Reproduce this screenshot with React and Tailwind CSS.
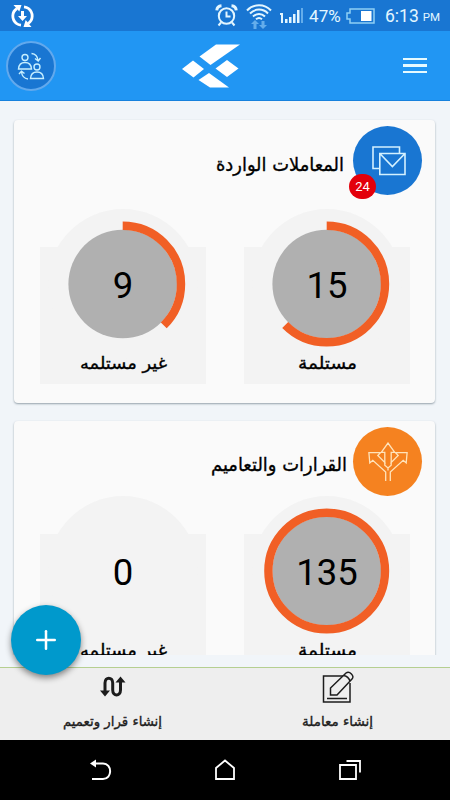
import React from 'react';
import { Plus } from 'lucide-react';

const sections = [
  {
    id: 'incoming',
    title: 'المعاملات الواردة',
    titleClass: 'right-[91px] top-[26px]',
    titleWidth: 128,
    color: 'bg-[#1976d2]',
    badge: 24,
    icon: MailIcon,
    gap: 'pt-[89px]',
    stats: [
      { label: 'مستلمة', width: 59, value: 15, percent: 62.5 },
      { label: 'غير مستلمه', width: 87, value: 9, percent: 37.5 },
    ],
  },
  {
    id: 'decisions',
    title: 'القرارات والتعاميم',
    titleClass: 'right-[88px] top-[25px]',
    titleWidth: 136,
    color: 'bg-[#f58220]',
    icon: ArrowsIcon,
    gap: 'pt-[75px]',
    stats: [
      { label: 'مستلمة', width: 59, value: 135, percent: 100 },
      { label: 'غير مستلمه', width: 87, value: 0, percent: 0 },
    ],
  },
];

function MailIcon() {
  return (
    <svg className="ml-[3px]" width="34" height="30" viewBox="0 0 34 30" fill="none" stroke="#d4f1ff" strokeWidth="1.6">
      <path d="M7.5 22.500H1V1h26.500v6" />
      <path d="M7.800 7.500H33v21H7.800zM7.800 7.500l12.600 13L33 7.500" />
    </svg>
  );
}

function ArrowsIcon() {
  return (
    <svg className="mt-[1px]" width="40" height="40" viewBox="0 0 40 40" fill="none" stroke="#ffe3ba" strokeWidth="1.300">
      <path d="M17.700 39V30L4.800 18.300 1.800 21 .9 10.700h11.600L9.800 13.500l7 7V10.300h-3.500L20 1l6.700 9.300h-3.500v10.200l7-7-2.700-2.800h11.600L38.200 21l-3-2.700L22.300 30v9" />
      <path d="M16.800 20.500v2.700L20 26l3.200-2.800v-2.700M20 26v2.500" />
    </svg>
  );
}

// Arabic label squeezed to a fixed width so every line keeps its measure
function Label({ text, width, size, className = '' }) {
  return (
    <svg width={width} height={size * 2} className={`block overflow-visible ${className}`}>
      <text
        x={width / 2}
        y={size * 1.3}
        textAnchor="middle"
        textLength={width}
        lengthAdjust="spacingAndGlyphs"
        direction="rtl"
        fontFamily="'DejaVu Sans', sans-serif"
        fontSize={size}
        fill="currentColor"
        stroke="currentColor"
        strokeWidth="0.35"
      >
        {text}
      </text>
    </svg>
  );
}

function Gauge({ value, percent, label, width }) {
  const length = 2 * Math.PI * 58.3;
  return (
    <div className="relative h-[175px] w-[166px]">
      <div className="absolute inset-x-0 bottom-0 top-[38px] bg-[#f3f3f3]" />
      <div className="absolute left-[8px] top-0 size-[150px] rounded-full bg-[#f3f3f3]" />
      <svg className="absolute left-[20px] top-[12px]" width="126" height="126" viewBox="0 0 126 126">
        {percent > 0 && <circle cx="62.700" cy="63" r="54.300" fill="#b0b0b0" />}
        {percent > 0 && (
          <circle
            cx="62.700"
            cy="63"
            r="58.300"
            fill="none"
            stroke="#f15f25"
            strokeWidth="8.400"
            strokeDasharray={`${(length * percent) / 100} ${length}`}
            transform="rotate(-90 62.700 63)"
          />
        )}
      </svg>
      <div className="absolute inset-x-0 top-[52px] text-center font-[Roboto,sans-serif] text-[36.5px] leading-[50px] text-black">
        {value}
      </div>
      <div className="absolute inset-x-0 top-[138px] flex justify-center text-black">
        <Label text={label} width={width} size={17} />
      </div>
    </div>
  );
}

function Section({ section }) {
  const Icon = section.icon;
  return (
    <section className={`relative h-[283px] w-[421px] shrink-0 rounded-[4px] bg-[#fafafa] shadow-[0_1px_2px_rgba(60,80,95,0.5)] ${section.gap}`}>
      <div className={`absolute text-black ${section.titleClass}`}>
        <Label text={section.title} width={section.titleWidth} size={19} />
      </div>
      <div className={`absolute right-[13px] top-[6px] flex size-[69px] items-center justify-center rounded-full ${section.color}`}>
        <Icon />
        {section.badge && (
          <span className="absolute left-[-4px] top-[48px] flex h-[25px] w-[27px] items-center justify-center rounded-full bg-[#e3000b] font-[Roboto,sans-serif] text-[13px] text-white">
            {section.badge}
          </span>
        )}
      </div>
      <div className="flex flex-row-reverse justify-between pl-[26px] pr-[25px]">
        {section.stats.map((stat) => (
          <Gauge key={stat.label} {...stat} />
        ))}
      </div>
    </section>
  );
}

function StatusBar() {
  return (
    <div className="flex h-[31px] items-center bg-[#1976d2] font-[Roboto,sans-serif] text-[#e3f6ff]">
      <svg className="ml-[11px] shrink-0" width="23" height="22" viewBox="0 0 23 22" fill="none" stroke="#fff" strokeWidth="2.800">
        <path d="M6 3.500C.5 7 .5 14.500 5.500 18.500c1 .8 2.500 1.500 4.500 1.700" />
        <path d="M17 18.500c5.500-3.500 5.500-11 .5-15-1-.8-2.500-1.500-4.500-1.700" />
        <path d="M2.500 0h8L8.300 6.500zM20.500 22h-8l2.200-7z" fill="#fff" stroke="none" />
        <path d="M10 6h3v5h3l-4.500 5L7 11h3z" fill="#fff" stroke="none" />
      </svg>
      <svg className="ml-[181px] shrink-0" width="23" height="23" viewBox="0 0 23 23" fill="none" stroke="currentColor" strokeWidth="2">
        <circle cx="11.500" cy="12" r="7.700" />
        <path d="M11.500 7.500V12.500h4M6 18.500l-2.500 3M17 18.500l2.500 3" />
        <path d="M1.800 6.300C2 3.500 3.800 2 6.500 1.800M21.200 6.300C21 3.500 19.200 2 16.500 1.800" strokeWidth="3" />
      </svg>
      <svg className="ml-[8px] shrink-0" width="26" height="26" viewBox="0 0 26 26" fill="none" stroke="currentColor" strokeWidth="2">
        <path d="M1 7.500C7.500.5 18.500.5 25 7.500M4 10.500c5-5.200 13-5.200 18 0M7 13.500c3.500-3.500 8.500-3.500 12 0M10 16.300c2-1.700 4-1.700 6 0" />
        <path d="M9 17l4 4h-2.500v5h-3v-5H5zM17 26l-4-4h2.500v-4h3v4H21z" fill="#64adeb" stroke="none" />
      </svg>
      <svg className="ml-[8px] shrink-0" width="23" height="17" viewBox="0 0 23 17" fill="currentColor">
        <path d="M0 6h3v10H1V8H0zM5 12h2.500v4H5zM9 10h2.500v6H9zM13 7h2.500v9H13zM17 3h2.500v13H17z" />
        <path d="M21 1h2v15h-2z" fill="#64adeb" />
      </svg>
      <span className="ml-[6px] mt-[2px] w-[33px] whitespace-nowrap text-[17px] tracking-[0.1px]">47%</span>
      <svg className="ml-[4px] mt-[1px] shrink-0" width="29" height="16" viewBox="0 0 29 16" fill="none">
        <path d="M4 1h24v14H4v-4H1V5h3z" stroke="#8fd0f5" strokeWidth="1.500" />
        <path d="M15 3h10.500v10H15z" fill="#fff" />
      </svg>
      <span className="ml-[10px] mt-[2px] text-[17.5px]">6:13</span>
      <span className="ml-[4px] mt-[5px] text-[11.5px]">PM</span>
    </div>
  );
}

function Header() {
  return (
    <header className="flex h-[70px] items-center border-b border-[#1681dd] bg-[#2196f3] pl-[6px] pr-[23px]">
      <button className="flex size-[50px] items-center justify-center rounded-full border-2 border-[#62a9ed] bg-[#1976d2]">
        <svg width="28" height="28" viewBox="0 0 28 28" fill="none" stroke="#c6efff" strokeWidth="1.400">
          <circle cx="8" cy="5.500" r="3" />
          <path d="M1.500 17c.3-4.500 2.700-6.500 6.500-6.500s6.200 2 6.500 6.500z" />
          <circle cx="20" cy="15" r="3" />
          <path d="M13.500 26.500c.3-4.500 2.700-6.500 6.500-6.500s6.200 2 6.500 6.500z" />
          <path d="M14.500 1.500c4 .3 6 2.500 6.500 7M18 6.500l3.200 2.500L23.500 6M11 27c-4-.5-6-3-6.500-7M2 22l2.500-2.800L7.500 21.500" />
        </svg>
      </button>
      <svg className="ml-[126px] mt-[1px]" width="58" height="44" viewBox="0 0 58 44" fill="#fff">
        <path d="M34 .5h24L28.500 21 17.500 12.500z" />
        <path d="M11 16.500l11 8.500-10.500 8.500L0 25z" />
        <path d="M45 16L56.500 24.500 45 33 33.500 24.500z" />
        <path d="M27 29l20 14.500H28L16.500 36z" />
      </svg>
      <button className="ml-auto flex w-[24px] flex-col gap-[4px]">
        <span className="h-[2.5px] bg-[#e6faff]" />
        <span className="h-[2.5px] bg-[#e6faff]" />
        <span className="h-[2.5px] bg-[#e6faff]" />
      </button>
    </header>
  );
}

function BottomBar() {
  return (
    <div className="flex h-[73px] border-t border-[#b5cf91] bg-[#eee] text-[#1c1c1c]">
      <button className="flex w-[225px] flex-col items-center pt-[8px]">
        <svg width="26" height="22" viewBox="0 0 26 22" fill="none" stroke="currentColor" strokeWidth="3">
          <path d="M5 16V7C5 .5 12.700.5 12.700 7v7c0 6.500 7.800 6.500 7.800 0V5" />
          <path d="M0 14.500h10L5 20.500zM15.500 6.500h10l-5-6z" fill="currentColor" stroke="none" />
        </svg>
        <Label text="إنشاء قرار وتعميم" width={99} size={13.5} className="mt-[10px]" />
      </button>
      <button className="flex w-[225px] flex-col items-center pt-[3px]">
        <svg width="32" height="32" viewBox="0 0 32 32" fill="none" stroke="currentColor" strokeWidth="1.500">
          <path d="M21 5H1.500v26H28V12M5 27.500h20" />
          <path d="M8.500 24v-7L24 2c3.500-2.500 9 3 6 6L15 24zM21.500 4.500c3 0 6 3 6.500 6" />
        </svg>
        <Label text="إنشاء معاملة" width={71} size={13.5} className="mt-[5px]" />
      </button>
    </div>
  );
}

function NavBar() {
  return (
    <nav className="flex h-[60px] items-center justify-between bg-black px-[89px]">
      <svg width="23" height="22" viewBox="0 0 23 22" fill="none" stroke="#fff" strokeWidth="2">
        <path d="M5 4.500h9c9.500 0 9.500 15.500 0 15.500H3" />
        <path d="M1 4.500L7 .5v8z" fill="#fff" stroke="none" />
      </svg>
      <svg className="-ml-[1px]" width="20" height="22" viewBox="0 0 20 22" fill="none" stroke="#fff" strokeWidth="1.800">
        <path d="M1 20V9L10 1.500 19 9v11z" />
      </svg>
      <svg width="22" height="22" viewBox="0 0 22 22" fill="none" stroke="#fff" strokeWidth="1.800">
        <path d="M1 6h16v14H1zM7.500 2H21v11.500" />
      </svg>
    </nav>
  );
}

export default function App() {
  return (
    <div className="relative flex h-[800px] w-[450px] flex-col overflow-hidden bg-[#f1f5f9]">
      <StatusBar />
      <Header />
      <main className="flex h-[554px] flex-col gap-[18px] overflow-hidden pl-[14px] pt-[19px]">
        {sections.map((section) => (
          <Section key={section.id} section={section} />
        ))}
      </main>
      <div className="h-[12px] shrink-0" />
      <BottomBar />
      <NavBar />
      <button className="absolute left-[11px] top-[605px] flex size-[70px] items-center justify-center rounded-full bg-[#0099cc] text-white shadow-[0_3px_6px_rgba(0,0,0,0.45)]">
        <Plus size={30} strokeWidth={2} />
      </button>
    </div>
  );
}
